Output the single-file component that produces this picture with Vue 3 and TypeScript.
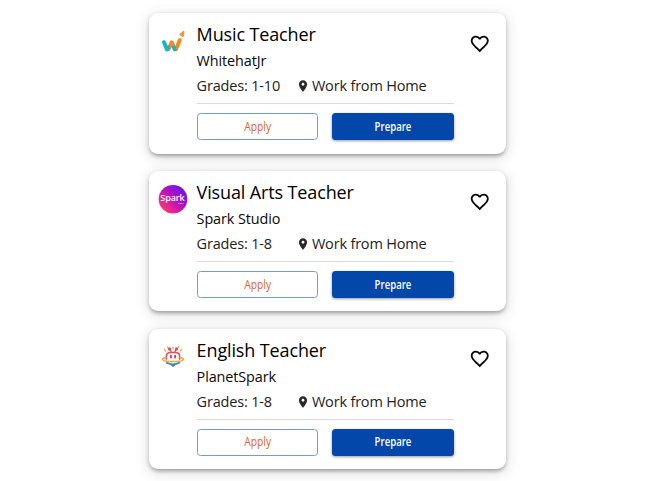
<script setup lang="ts">
interface Job {
  title: string
  company: string
  grades: string
  location: string
  logo: 'whitehat' | 'spark' | 'planet'
}

const jobs: Job[] = [
  { title: 'Music Teacher', company: 'WhitehatJr', grades: '1-10', location: 'Work from Home', logo: 'whitehat' },
  { title: 'Visual Arts Teacher', company: 'Spark Studio', grades: '1-8', location: 'Work from Home', logo: 'spark' },
  { title: 'English Teacher', company: 'PlanetSpark', grades: '1-8', location: 'Work from Home', logo: 'planet' },
]
</script>

<template>
  <main class="list">
    <article v-for="job in jobs" :key="job.title" class="card">
      <div class="logo">
        <svg v-if="job.logo === 'whitehat'" width="30" height="30" viewBox="0 0 30 30" fill="none" stroke-linecap="round" stroke-linejoin="round">
          <path d="M18 23.2 L21.8 14.2" stroke="#f58a1f" stroke-width="4" />
          <path d="M10.6 23 L13.6 16.6" stroke="#f58a1f" stroke-width="4" />
          <path d="M6 16.2 L9 23.4 L10.2 21.6" stroke="#17b3c8" stroke-width="4" />
          <path d="M14.6 18.4 L16.6 23.4" stroke="#17b3c8" stroke-width="3.8" />
          <path d="M13.6 16.6 L14.4 18.4" stroke="#f58a1f" stroke-width="4" />
          <path d="M22.3 8.4 L25.6 5.8 L25 10 Z" fill="#f29344" stroke="#f29344" stroke-width="1.8" />
        </svg>
        <svg v-else-if="job.logo === 'spark'" width="30" height="30" viewBox="0 0 30 30">
          <defs>
            <linearGradient id="spark-fill" x1="0.1" y1="0.9" x2="0.85" y2="0.1">
              <stop offset="0" stop-color="#ff3b6b" />
              <stop offset=".5" stop-color="#c411b4" />
              <stop offset="1" stop-color="#6a13ef" />
            </linearGradient>
          </defs>
          <circle cx="15" cy="15.2" r="14.3" fill="url(#spark-fill)" />
          <text x="14.5" y="16.9" class="spark-name" text-anchor="middle">Spark</text>
          <path d="M20 19.5h5.4" stroke="#f3c6f2" stroke-width="1" stroke-dasharray="1.2 .4" opacity=".75" />
        </svg>
        <svg v-else width="30" height="30" viewBox="0 0 30 30" fill="none" stroke-linecap="round">
          <path d="M6.2 8.2l1.3 1.8M9.6 5.6l.3 1.3M15 6v2M20.4 5.6l-.3 1.3M23.8 8.2l-1.3 1.8" stroke="#f0b64c" stroke-width="1.4" />
          <path d="M12.4 9.2l1 2.3M17.6 9.2l-1 2.3" stroke="#d9536a" stroke-width="1.4" />
          <circle cx="11.5" cy="8" r="1.7" fill="#d9536a" />
          <circle cx="18.5" cy="8" r="1.7" fill="#d9536a" />
          <path d="M8.4 18v-2.5q0-4 4-4h5.2q4 0 4 4V18" stroke="#d9536a" stroke-width="1.7" />
          <path d="M12.9 14.8v1.6M17.1 14.8v1.6" stroke="#cc4560" stroke-width="2" />
          <path d="M8 16.6C1 17.8 5 20.6 15 20.6s14-2.8 7-4" stroke="#edaa43" stroke-width="1.5" />
          <path d="M8.6 21.8q6.4 3 12.8 0" stroke="#3e86b8" stroke-width="1.7" />
          <path d="M11.8 23.4h6.4L15 26z" fill="#3e86b8" />
        </svg>
      </div>
      <div class="body">
        <h2 class="title">{{ job.title }}</h2>
        <p class="company">{{ job.company }}</p>
        <div class="meta">
          <span class="grades">Grades: {{ job.grades }}</span>
          <svg class="pin" viewBox="0 0 24 24" width="14" height="14">
            <path d="M12 2C8.13 2 5 5.13 5 9c0 5.25 7 13 7 13s7-7.75 7-13c0-3.87-3.13-7-7-7zm0 9.5c-1.38 0-2.5-1.12-2.5-2.5s1.12-2.5 2.5-2.5 2.5 1.12 2.5 2.5-1.12 2.5-2.5 2.5z" />
          </svg>
          <span class="place">{{ job.location }}</span>
        </div>
        <div class="actions">
          <button class="btn apply" type="button"><span class="label">Apply</span></button>
          <button class="btn prepare" type="button"><span class="label">Prepare</span></button>
        </div>
      </div>
      <button class="favorite" type="button" aria-label="Save job">
        <svg viewBox="0 0 24 24" width="21.5" height="21.5">
          <path d="M16.5 3c-1.74 0-3.41.81-4.5 2.09C10.91 3.81 9.24 3 7.5 3 4.42 3 2 5.42 2 8.5c0 3.78 3.4 6.86 8.55 11.54L12 21.35l1.45-1.32C18.6 15.36 22 12.28 22 8.5 22 5.42 19.58 3 16.5 3zm-4.4 15.55l-.1.1-.1-.1C7.14 14.24 4 11.39 4 8.5 4 6.5 5.5 5 7.5 5c1.54 0 3.04.99 3.57 2.36h1.87C13.46 5.99 14.96 5 16.5 5c2 0 3.5 1.5 3.5 3.5 0 2.89-3.14 5.74-7.9 10.05z" />
        </svg>
      </button>
    </article>
  </main>
</template>

<style>
body {
  background: #fff;
  overflow: hidden;
}
</style>

<style scoped>
.list {
  box-sizing: border-box;
  width: 650px;
  height: 481px;
  padding: 13px 0 0 149px;
  display: flex;
  flex-direction: column;
  gap: 17.3px;
  overflow: hidden;
  font-family: "Open Sans", "Noto Sans", sans-serif;
}

.card {
  box-sizing: border-box;
  flex: none;
  display: flex;
  align-items: flex-start;
  width: 357px;
  height: 140.5px;
  padding: 8.4px 14px 0 9px;
  border-radius: 9px;
  background: #fff;
  box-shadow:
    0 4px 4px -3px rgba(0, 0, 0, 0.2),
    0 2px 4px rgba(0, 0, 0, 0.22),
    0 3px 14px 2px rgba(0, 0, 0, 0.11);
}

.logo {
  width: 39px;
  padding-top: 4.5px;
}

.logo svg {
  display: block;
}

.spark-name {
  font: 600 9px "Open Sans", sans-serif;
  letter-spacing: -0.1px;
  fill: #fff;
}

.body {
  width: 257px;
  margin-left: -0.4px;
  margin-right: 0.4px;
}

.title {
  margin: 0;
  font-size: 18px;
  font-weight: 400;
  line-height: 27px;
  letter-spacing: -0.13px;
  color: #000;
}

.company {
  margin: 0;
  font-size: 14.4px;
  line-height: 25.4px;
  letter-spacing: -0.1px;
  color: #080808;
}

.meta {
  display: flex;
  align-items: flex-start;
  height: 30.6px;
  padding-top: 2.6px;
  border-bottom: 1px solid #dadada;
  box-sizing: border-box;
  font-size: 14.5px;
  line-height: 20px;
  letter-spacing: -0.18px;
  color: #222;
}

.grades {
  width: 99.3px;
}

.pin {
  width: 14px;
  margin: 3px 2px 0 0;
  fill: #2d2828;
}

.actions {
  display: grid;
  grid-template-columns: 1fr 1fr;
  gap: 14px;
  padding-top: 8.8px;
}

.btn {
  box-sizing: border-box;
  height: 27.2px;
  padding: 0;
  border-radius: 3.5px;
  font-family: inherit;
  font-size: 12px;
  line-height: 20px;
}

.label {
  display: inline-block;
  transform: scaleX(0.86);
}

.apply {
  border: 1px solid #789acb;
  background: #fff;
  color: #dc6428;
}

.prepare {
  border: 0;
  background: #0347ab;
  color: #fff;
  font-weight: 600;
  box-shadow: 0 1px 3px rgba(0, 0, 0, 0.4);
}

.prepare .label {
  transform: scaleX(0.8);
}

.favorite {
  margin: 11.4px 0 0 14.8px;
  padding: 0;
  border: 0;
  background: none;
}

.favorite svg {
  display: block;
  fill: #080808;
}
</style>
